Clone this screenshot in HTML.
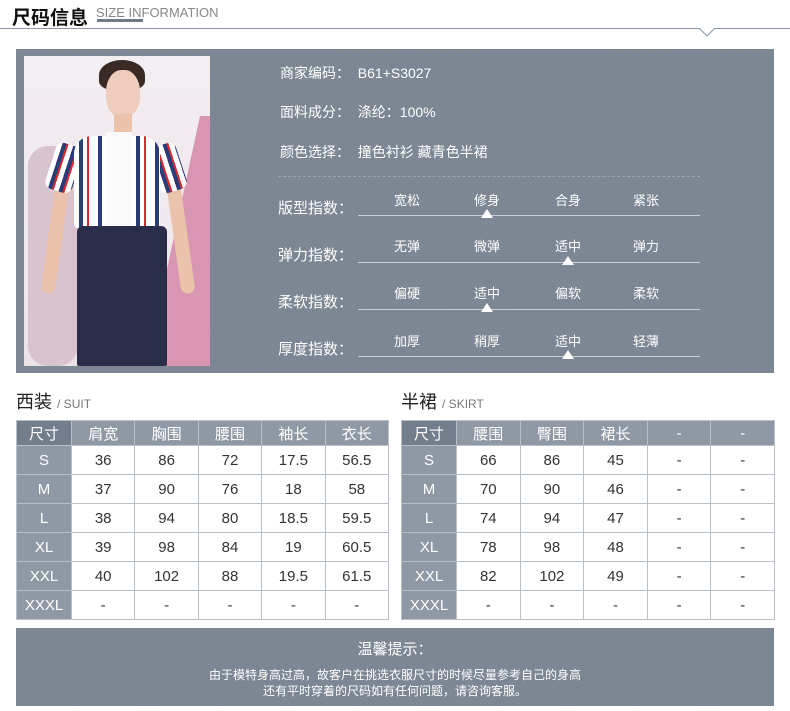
<!DOCTYPE html>
<html><head><meta charset="utf-8"><style>
*{margin:0;padding:0;box-sizing:border-box}
body{width:790px;height:711px;background:#fff;font-family:"Liberation Sans","Noto Sans CJK SC",sans-serif;position:relative;overflow:hidden;color:#333}
.a{position:absolute}
.pat{background-color:#7a8592;background-image:repeating-linear-gradient(45deg,rgba(255,255,255,.05) 0 1px,transparent 1px 3px)}
.w{color:#fff}
table{position:absolute;border-collapse:collapse;table-layout:fixed}
td{border:1px solid #b9bfc7;text-align:center;font-size:15px;height:29px;color:#333;background:#fff;padding:0}
tr:first-child td{background:#8f99a6;color:#fff;height:25px}
tr:first-child td:first-child{background:#737e8c}
td:first-child{background:#8f99a6;color:#fff}
.sl{position:absolute;left:358px;width:342px;height:1px;background:#c9d0d8}
.tri{position:absolute;width:0;height:0;border-left:6px solid transparent;border-right:6px solid transparent;border-bottom:9px solid #fff}
.lb{position:absolute;font-size:13px;color:#fff;width:60px;text-align:center}
.rl{position:absolute;left:278px;font-size:15px;color:#fff}
</style></head><body>
<div class="a" style="left:12px;top:3px;font-size:19px;color:#111;font-weight:bold">尺码信息</div>
<div class="a" style="left:96px;top:5px;font-size:13px;color:#888">SIZE INFORMATION</div>
<div class="a" style="left:97px;top:19px;width:46px;height:3px;background:#6e7a88"></div>
<div class="a" style="left:0;top:28px;width:790px;height:1px;background:#8a95a2"></div>
<svg class="a" style="left:698px;top:28px" width="18" height="10"><polyline points="1,0 9,8 17,0" fill="#fff" stroke="#8a95a2"/></svg>

<div class="a pat" style="left:16px;top:49px;width:758px;height:324px"></div>
<div class="a" style="left:24px;top:56px;width:186px;height:310px;background:linear-gradient(180deg,#f3eef2,#ece3e9);overflow:hidden">
 <div class="a" style="left:120px;top:60px;width:80px;height:260px;background:#d996b2;clip-path:polygon(70% 0,100% 0,100% 100%,0 100%)"></div>
 <div class="a" style="left:4px;top:90px;width:50px;height:220px;background:#d9c3ce;border-radius:20px"></div>
 <div class="a" style="left:75px;top:4px;width:46px;height:30px;background:#3a2a26;border-radius:50% 50% 30% 30%"></div>
 <div class="a" style="left:82px;top:14px;width:34px;height:48px;background:#efcdbc;border-radius:45%"></div>
 <div class="a" style="left:90px;top:58px;width:18px;height:20px;background:#ebc3ac"></div>
 <div class="a" style="left:24px;top:128px;width:14px;height:110px;background:#ebc3ac;border-radius:7px;transform:rotate(8deg)"></div>
 <div class="a" style="left:150px;top:128px;width:14px;height:110px;background:#ebc3ac;border-radius:7px;transform:rotate(-8deg)"></div>
 <div class="a" style="left:26px;top:88px;width:28px;height:48px;background:#fff;border-radius:8px;transform:rotate(18deg);background:repeating-linear-gradient(90deg,#fff 0 5px,#2b3d78 5px 9px,#d92a2f 9px 11px)"></div>
 <div class="a" style="left:130px;top:88px;width:28px;height:48px;border-radius:8px;transform:rotate(-18deg);background:repeating-linear-gradient(90deg,#fff 0 5px,#2b3d78 5px 9px,#d92a2f 9px 11px)"></div>
 <div class="a" style="left:50px;top:80px;width:86px;height:92px;border-radius:18px 18px 4px 4px;background:repeating-linear-gradient(90deg,#fff 0 5px,#2b3d78 5px 9px,#fff 9px 13px,#d92a2f 13px 15px,#fff 15px 19px)"></div>
 <div class="a" style="left:82px;top:76px;width:26px;height:96px;background:#fafafa"></div>
 <div class="a" style="left:53px;top:170px;width:90px;height:140px;background:#2a2d4a;border-radius:6px 6px 2px 2px"></div>
</div>

<div class="a w" style="left:280px;top:63px;font-size:14px">商家编码：&nbsp;&nbsp;B61+S3027</div>
<div class="a w" style="left:280px;top:102px;font-size:14px">面料成分：&nbsp;&nbsp;涤纶：100%</div>
<div class="a w" style="left:280px;top:142px;font-size:14px">颜色选择：&nbsp;&nbsp;撞色衬衫 藏青色半裙</div>
<div class="a" style="left:278px;top:176px;width:422px;border-top:1px dashed #9aa4b0"></div>

<div class="rl" style="top:197px">版型指数：</div>
<div class="lb" style="left:377px;top:190px">宽松</div><div class="lb" style="left:457px;top:190px">修身</div><div class="lb" style="left:538px;top:190px">合身</div><div class="lb" style="left:616px;top:190px">紧张</div>
<div class="sl" style="top:215px"></div><div class="tri" style="left:481px;top:209px"></div>

<div class="rl" style="top:244px">弹力指数：</div>
<div class="lb" style="left:377px;top:236px">无弹</div><div class="lb" style="left:457px;top:236px">微弹</div><div class="lb" style="left:538px;top:236px">适中</div><div class="lb" style="left:616px;top:236px">弹力</div>
<div class="sl" style="top:262px"></div><div class="tri" style="left:562px;top:256px"></div>

<div class="rl" style="top:291px">柔软指数：</div>
<div class="lb" style="left:377px;top:283px">偏硬</div><div class="lb" style="left:457px;top:283px">适中</div><div class="lb" style="left:538px;top:283px">偏软</div><div class="lb" style="left:616px;top:283px">柔软</div>
<div class="sl" style="top:309px"></div><div class="tri" style="left:481px;top:303px"></div>

<div class="rl" style="top:338px">厚度指数：</div>
<div class="lb" style="left:377px;top:331px">加厚</div><div class="lb" style="left:457px;top:331px">稍厚</div><div class="lb" style="left:538px;top:331px">适中</div><div class="lb" style="left:616px;top:331px">轻薄</div>
<div class="sl" style="top:356px"></div><div class="tri" style="left:562px;top:350px"></div>

<div class="a" style="left:16px;top:388px;font-size:18px;color:#222">西装 <span style="font-size:12px;color:#777">/ SUIT</span></div>
<div class="a" style="left:401px;top:388px;font-size:18px;color:#222">半裙 <span style="font-size:12px;color:#777">/ SKIRT</span></div>

<table style="left:16px;top:420px;width:373px">
<colgroup><col style="width:55px"><col><col><col><col><col></colgroup>
<tr><td>尺寸</td><td>肩宽</td><td>胸围</td><td>腰围</td><td>袖长</td><td>衣长</td></tr>
<tr><td>S</td><td>36</td><td>86</td><td>72</td><td>17.5</td><td>56.5</td></tr>
<tr><td>M</td><td>37</td><td>90</td><td>76</td><td>18</td><td>58</td></tr>
<tr><td>L</td><td>38</td><td>94</td><td>80</td><td>18.5</td><td>59.5</td></tr>
<tr><td>XL</td><td>39</td><td>98</td><td>84</td><td>19</td><td>60.5</td></tr>
<tr><td>XXL</td><td>40</td><td>102</td><td>88</td><td>19.5</td><td>61.5</td></tr>
<tr><td>XXXL</td><td>-</td><td>-</td><td>-</td><td>-</td><td>-</td></tr>
</table>
<table style="left:401px;top:420px;width:374px">
<colgroup><col style="width:55px"><col><col><col><col><col></colgroup>
<tr><td>尺寸</td><td>腰围</td><td>臀围</td><td>裙长</td><td>-</td><td>-</td></tr>
<tr><td>S</td><td>66</td><td>86</td><td>45</td><td>-</td><td>-</td></tr>
<tr><td>M</td><td>70</td><td>90</td><td>46</td><td>-</td><td>-</td></tr>
<tr><td>L</td><td>74</td><td>94</td><td>47</td><td>-</td><td>-</td></tr>
<tr><td>XL</td><td>78</td><td>98</td><td>48</td><td>-</td><td>-</td></tr>
<tr><td>XXL</td><td>82</td><td>102</td><td>49</td><td>-</td><td>-</td></tr>
<tr><td>XXXL</td><td>-</td><td>-</td><td>-</td><td>-</td><td>-</td></tr>
</table>

<div class="a pat" style="left:16px;top:628px;width:758px;height:78px;text-align:center;color:#fff">
<div style="font-size:15px;margin-top:10px">温馨提示：</div>
<div style="font-size:12px;margin-top:8px;line-height:16px">由于模特身高过高，故客户在挑选衣服尺寸的时候尽量参考自己的身高<br>还有平时穿着的尺码如有任何问题，请咨询客服。</div>
</div>
</body></html>
